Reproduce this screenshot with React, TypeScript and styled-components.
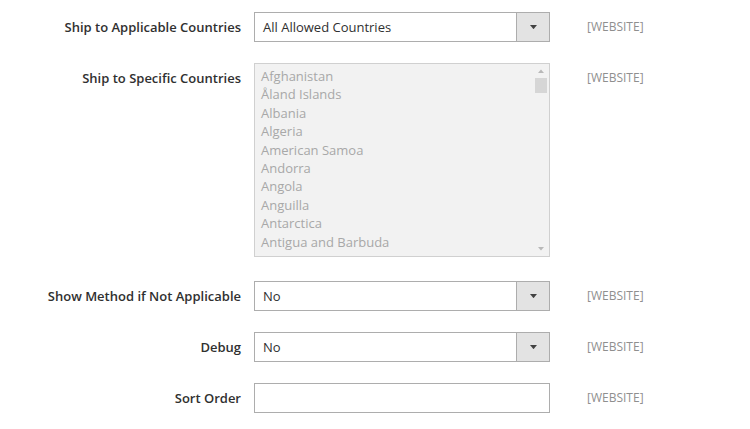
import React from 'react';
import styled, { createGlobalStyle } from 'styled-components';

const countries = [
  'Afghanistan',
  'Åland Islands',
  'Albania',
  'Algeria',
  'American Samoa',
  'Andorra',
  'Angola',
  'Anguilla',
  'Antarctica',
  'Antigua and Barbuda',
];

const fields: IField[] = [
  { label: 'Ship to Applicable Countries', kind: 'select', value: 'All Allowed Countries' },
  { label: 'Ship to Specific Countries', kind: 'multi' },
  { label: 'Show Method if Not Applicable', kind: 'select', value: 'No' },
  { label: 'Debug', kind: 'select', value: 'No' },
  { label: 'Sort Order', kind: 'text' },
];

const Arrow = ({ size = 7 }: { size?: number }) => (
  <svg width={size} height={size * 0.6} viewBox="0 0 10 6">
    <path d="M0 0 L10 0 L5 6 Z" fill="currentColor" />
  </svg>
);

const App = () => (
  <>
    <GlobalStyle />
    <Form>
      {fields.map((field) => (
        <Row key={field.label} $multi={field.kind === 'multi'}>
          <Label>{field.label}</Label>
          {field.kind === 'select' && (
            <Select>
              <SelectValue>{field.value}</SelectValue>
              <SelectButton>
                <Arrow />
              </SelectButton>
            </Select>
          )}
          {field.kind === 'multi' && (
            <MultiSelect>
              <Options>
                {countries.map((c) => (
                  <Option key={c}>{c}</Option>
                ))}
              </Options>
              <Scrollbar>
                <ScrollArrow>
                  <Arrow size={6} />
                </ScrollArrow>
                <Thumb />
                <Spacer />
                <ScrollArrow $down>
                  <Arrow size={6} />
                </ScrollArrow>
              </Scrollbar>
            </MultiSelect>
          )}
          {field.kind === 'text' && <TextInput />}
          <Scope>[WEBSITE]</Scope>
        </Row>
      ))}
    </Form>
  </>
);

interface IField {
  label: string;
  kind: 'select' | 'multi' | 'text';
  value?: string;
}

export default App;

const GlobalStyle = createGlobalStyle`
  html, body {
    margin: 0;
    padding: 0;
    background: #fff;
    font-family: 'Open Sans', 'Noto Sans', sans-serif;
    color: #303030;
  }
`;

const Form = styled.div`
  padding-top: 12px;
  display: flex;
  flex-direction: column;
`;

const Row = styled.div<{ $multi?: boolean }>`
  display: grid;
  grid-template-columns: 241px 296px auto;
  column-gap: 13px;
  align-items: start;
  margin-bottom: ${({ $multi }) => ($multi ? '24px' : '21px')};
`;

const Label = styled.div`
  text-align: right;
  font-size: 13px;
  font-weight: 600;
  line-height: 30px;
  color: #303030;
`;

const Select = styled.div`
  box-sizing: border-box;
  height: 30px;
  border: 1px solid #adadad;
  display: flex;
  background: #fff;
`;

const SelectValue = styled.div`
  flex: 1;
  padding-left: 8px;
  font-size: 13px;
  line-height: 28px;
  color: #303030;
`;

const SelectButton = styled.div`
  width: 32px;
  border-left: 1px solid #adadad;
  background: #e3e3e3;
  display: flex;
  align-items: center;
  justify-content: center;
  color: #414141;
`;

const MultiSelect = styled.div`
  box-sizing: border-box;
  height: 194px;
  border: 1px solid #d0d0d0;
  background: #f2f2f2;
  display: flex;
  overflow: hidden;
`;

const Options = styled.div`
  flex: 1;
  padding: 3px 0 0 6px;
`;

const Option = styled.div`
  font-size: 13px;
  line-height: 18.4px;
  color: #a8a8a8;
  white-space: nowrap;
`;

const Scrollbar = styled.div`
  width: 15px;
  margin-right: 1px;
  display: flex;
  flex-direction: column;
  align-items: center;
`;

const ScrollArrow = styled.div<{ $down?: boolean }>`
  height: 14px;
  display: flex;
  align-items: center;
  justify-content: center;
  color: #b8b8b8;
  transform: ${({ $down }) => ($down ? 'none' : 'rotate(180deg)')};
`;

const Thumb = styled.div`
  width: 12px;
  height: 15px;
  background: #d6d6d6;
`;

const Spacer = styled.div`
  flex: 1;
`;

const TextInput = styled.div`
  box-sizing: border-box;
  height: 30px;
  border: 1px solid #adadad;
  background: #fff;
`;

const Scope = styled.div`
  margin-left: 24px;
  font-size: 12px;
  line-height: 30px;
  color: #8f8f8f;
`;
